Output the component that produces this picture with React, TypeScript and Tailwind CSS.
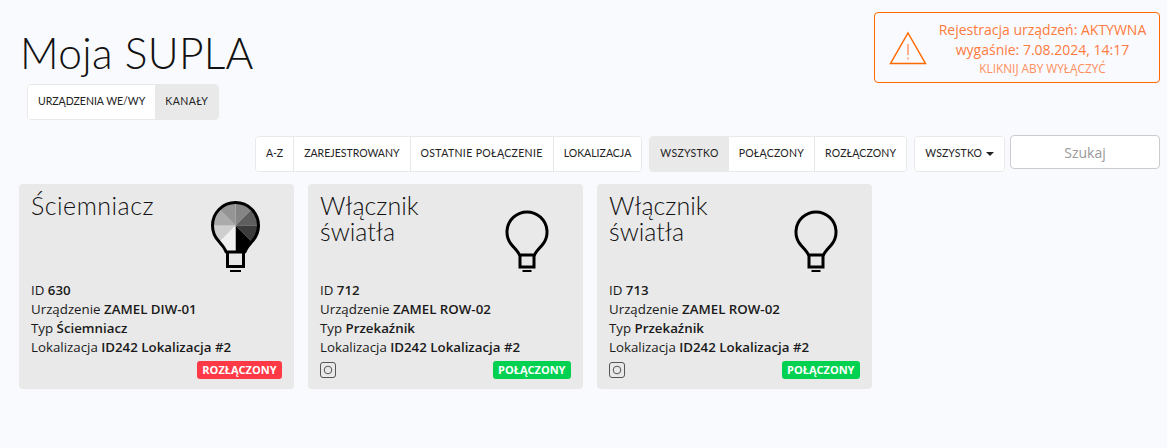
import React from "react";

const heading = { fontFamily: '"Lato", "Noto Sans", sans-serif' };

function Bulb({ dim }: { dim?: boolean }) {
  if (dim) {
    const cx = 24.5, cy = 24.5;
    const fills = ["#858585", "#5e5e5e", "#3c3c3c", "#000000", "#f0f0f0", "#cfcfcf", "#ababab", "#959595"];
    const pt = (deg: number, rr = 40) => {
      const a = (deg * Math.PI) / 180;
      return `${cx + rr * Math.sin(a)} ${cy - rr * Math.cos(a)}`;
    };
    const outline = "M15 51 C14 47 11 44 8.2 40.8 A23 23 0 1 1 40.8 40.8 C38 44 35 47 34 51 Z";
    return (
      <svg width="49" height="72" viewBox="0 0 49 72" className="block">
        <defs>
          <clipPath id="bulbclip"><path d={outline} /></clipPath>
        </defs>
        <g clipPath="url(#bulbclip)">
          {fills.map((f, i) => (
            <path key={i} d={`M${cx} ${cy} L${pt(i * 45)} L${pt((i + 1) * 45)} Z`} fill={f} />
          ))}
        </g>
        <path d={outline} fill="none" stroke="#000" strokeWidth="3" strokeLinejoin="round" />
        <path d="M16.5 52 V65.5 H32.5 V52" fill="none" stroke="#000" strokeWidth="3" />
        <path d="M19 70 H30" stroke="#000" strokeWidth="2" />
      </svg>
    );
  }
  return (
    <svg width="44" height="64" viewBox="0 0 44 64" className="block">
      <path d="M14.5 45 C13 41 9 38 6 34 A20 20 0 1 1 38 34 C35 38 31 41 29.5 45 Z" fill="none" stroke="#000" strokeWidth="3" strokeLinejoin="round" />
      <path d="M15 45 V57 H29 V45" fill="none" stroke="#000" strokeWidth="3" />
      <path d="M17.5 61 H26.5" stroke="#000" strokeWidth="2" />
    </svg>
  );
}

function Card({ title, id, device, type, connected, dim }: { title: React.ReactNode; id: string; device: string; type: string; connected: boolean; dim?: boolean }) {
  return (
    <div className="w-[275px] h-[205px] rounded bg-[#e9e9e9] pl-3 pr-3 flex flex-col">
      <div className="flex h-[97px] justify-between">
        <div className={`text-[25px] leading-[26px] font-light text-[#111] pt-[8px] ${dim ? "tracking-[0.5px]" : ""}`} style={heading}>{title}</div>
        <div className={dim ? "pt-[17px] pr-[22px]" : "pt-[26px] pr-[22px]"}><Bulb dim={dim} /></div>
      </div>
      <div className="text-[13.3px] leading-[19px] text-[#1a1a1a]">
        <div>ID <b className="font-semibold">{id}</b></div>
        <div>Urządzenie <b className="font-semibold">{device}</b></div>
        <div>Typ <b className="font-semibold">{type}</b></div>
        <div>Lokalizacja <b className="font-semibold">ID242 Lokalizacja #2</b></div>
      </div>
      <div className="flex justify-between items-center mt-[4px]">
        {connected ? (
          <svg width="16" height="16" viewBox="0 0 16 16"><rect x="0.5" y="0.5" width="15" height="15" rx="2.5" fill="none" stroke="#555" /><circle cx="8" cy="8" r="3.8" fill="none" stroke="#555" /></svg>
        ) : <span />}
        <span className={`h-[18px] rounded-[3px] px-[5.5px] text-[11px] leading-[18px] font-bold text-white ${connected ? "bg-[#00d151]" : "bg-[#ff3946]"}`}>
          {connected ? "POŁĄCZONY" : "ROZŁĄCZONY"}
        </span>
      </div>
    </div>
  );
}

function Btn({ children, active, last, className = "" }: { children: React.ReactNode; active?: boolean; last?: boolean; className?: string }) {
  return (
    <div className={`h-full flex items-center px-[10px] ${last ? "" : "border-r border-[#e7e7e7]"} ${active ? "bg-[#e9e9e9]" : "bg-white"} ${className}`}>
      {children}
    </div>
  );
}

export default function App() {
  return (
    <div className="w-[1167px] h-[448px] overflow-hidden bg-[#f9fafd] text-[#222]" style={{ fontFamily: '"Open Sans", sans-serif' }}>
      <div className="flex justify-between pl-[20px] pr-[7px] pt-[12px] h-[136px]">
        <div>
          <h1 className="text-[42.5px] leading-[50px] font-light tracking-[0.3px] text-[#111] mt-[16px]" style={heading}>Moja SUPLA</h1>
          <div className="ml-[7px] mt-[6px] inline-flex h-[36px] rounded border border-[#e9e9e9] overflow-hidden text-[10.5px] font-normal" style={heading}>
            <Btn last>URZĄDZENIA WE/WY</Btn>
            <Btn active last className="tracking-[0.45px]">KANAŁY</Btn>
          </div>
        </div>
        <div className="w-[286px] h-[71px] border border-[#ff6a00] rounded flex items-center text-center">
          <svg width="38" height="34" viewBox="0 0 38 34" className="ml-[14px] shrink-0">
            <path d="M19 2 L36.5 32.5 H1.5 Z" fill="none" stroke="#ff6a00" strokeWidth="1.5" />
            <path d="M19 13 V24 M19 26.5 V28.5" stroke="#ff8c55" strokeWidth="1.3" />
          </svg>
          <div className="flex-1 pl-[11px] pr-[12px]">
            <div className="text-[14px] leading-[20px] text-[#ff7a3d] whitespace-nowrap">Rejestracja urządzeń: AKTYWNA</div>
            <div className="text-[14px] leading-[20px] text-[#ff7a3d] whitespace-nowrap">wygaśnie: 7.08.2024, 14:17</div>
            <div className="text-[11.8px] leading-[16px] text-[#ff8d5c] whitespace-nowrap">KLIKNIJ ABY WYŁĄCZYĆ</div>
          </div>
        </div>
      </div>
      <div className="flex justify-end items-start pr-[7px] text-[10.5px] font-normal" style={heading}>
        <div className="flex h-[36px] rounded border border-[#e9e9e9] overflow-hidden">
          <Btn>A-Z</Btn>
          <Btn>ZAREJESTROWANY</Btn>
          <Btn className="tracking-[0.36px]">OSTATNIE POŁĄCZENIE</Btn>
          <Btn last>LOKALIZACJA</Btn>
        </div>
        <div className="flex h-[36px] ml-[7px] rounded border border-[#e9e9e9] overflow-hidden">
          <Btn active last className="tracking-[0.3px]">WSZYSTKO</Btn>
          <Btn className="tracking-[0.25px]">POŁĄCZONY</Btn>
          <Btn last className="tracking-[0.15px]">ROZŁĄCZONY</Btn>
        </div>
        <div className="flex h-[36px] ml-[7px] rounded border border-[#e9e9e9] overflow-hidden">
          <Btn last className="tracking-[0.1px]">WSZYSTKO<span className="ml-[4px] w-0 h-0 border-x-[4px] border-x-transparent border-t-[4px] border-t-[#222]" /></Btn>
        </div>
        <div className="ml-[5px] -mt-[1px] w-[150px] h-[34px] rounded border border-[#ccc] bg-white flex items-center justify-center text-[14px] text-[#999]" style={{ fontFamily: '"Open Sans", sans-serif' }}>Szukaj</div>
      </div>
      <div className="flex gap-[14px] pl-[19px] mt-[12px]">
        <Card title="Ściemniacz" id="630" device="ZAMEL DIW-01" type="Ściemniacz" connected={false} dim />
        <Card title={<>Włącznik<br />światła</>} id="712" device="ZAMEL ROW-02" type="Przekaźnik" connected />
        <Card title={<>Włącznik<br />światła</>} id="713" device="ZAMEL ROW-02" type="Przekaźnik" connected />
      </div>
    </div>
  );
}
